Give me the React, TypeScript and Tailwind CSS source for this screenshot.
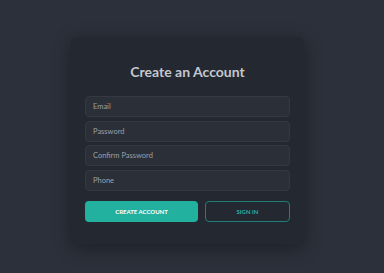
import React from "react";

const fields = ["Email", "Password", "Confirm Password", "Phone"];

export default function App() {
  return (
    <div
      className="w-[384px] h-[273px] bg-[#2b303a] flex pl-[71px] pt-[37px]"
      style={{ fontFamily: "Lato, 'Noto Sans', sans-serif" }}
    >
      <div className="w-[233px] h-[207px] bg-[#242830] rounded-md shadow-[0_4px_18px_rgba(0,0,0,0.35)] px-[14px] pt-[25px] flex flex-col">
        <h1 className="text-center text-[14px] font-bold text-[#c3c7cf] leading-[20px] mb-[14px]">
          Create an Account
        </h1>
        <div className="flex flex-col gap-[3.5px]">
          {fields.map((f) => (
            <input
              key={f}
              placeholder={f}
              className="h-[21px] w-full rounded-[4px] bg-[#2a2f38] border border-[#343944] px-[7px] text-[7.5px] text-[#c3c7cf] placeholder:text-[#9aa0aa] outline-none"
            />
          ))}
        </div>
        <div className="flex gap-[7px] mt-[10px]">
          <button className="w-[113px] h-[21px] rounded-[4px] bg-[#22b09f] text-white text-[6px] font-bold uppercase">
            Create Account
          </button>
          <button className="flex-1 h-[21px] rounded-[4px] border border-[#1f7f76] text-[#26b3a3] text-[6px] font-bold uppercase">
            Sign In
          </button>
        </div>
      </div>
    </div>
  );
}
